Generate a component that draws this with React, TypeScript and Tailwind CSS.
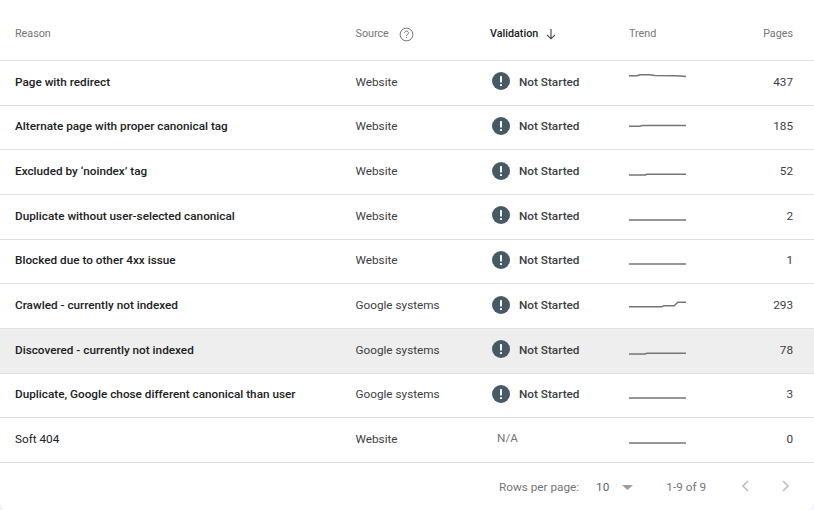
import React from "react";

type Row = { reason: string; source: string; status: boolean; pages: string; points: string; bold?: boolean; hover?: boolean };

const rows: Row[] = [
  { reason: "Page with redirect", source: "Website", status: true, pages: "437", points: "0,7.7 8,7.7 11,6.7 20,6.7 26,7.5 46,7.7 52,8 57,8.4", bold: true },
  { reason: "Alternate page with proper canonical tag", source: "Website", status: true, pages: "185", points: "0,14.2 11,14.2 13,13.4 57,13.4", bold: true },
  { reason: "Excluded by ‘noindex’ tag", source: "Website", status: true, pages: "52", points: "0,18 16,18 18,17.3 57,17.3", bold: true },
  { reason: "Duplicate without user-selected canonical", source: "Website", status: true, pages: "2", points: "0,18 57,18", bold: true },
  { reason: "Blocked due to other 4xx issue", source: "Website", status: true, pages: "1", points: "0,18 57,18", bold: true },
  { reason: "Crawled - currently not indexed", source: "Google systems", status: true, pages: "293", points: "0,15.7 33,15.7 35,14.7 45,14.7 49,11.2 57,11.2", bold: true },
  { reason: "Discovered - currently not indexed", source: "Google systems", status: true, pages: "78", points: "0,18 16,18 18,17.2 57,17.2", hover: true, bold: true },
  { reason: "Duplicate, Google chose different canonical than user", source: "Google systems", status: true, pages: "3", points: "0,18 57,18", bold: true },
  { reason: "Soft 404", source: "Website", status: false, pages: "0", points: "0,18 57,18" },
];

function Spark({ points }: { points: string }) {
  return (
    <svg width="58" height="30" viewBox="0 0 58 30" fill="none">
      <polyline points={points} stroke="#757575" strokeWidth="1.5" />
    </svg>
  );
}

function Alert() {
  return (
    <svg width="18" height="18" viewBox="0 0 18 18">
      <circle cx="9" cy="9" r="9" fill="#455a64" />
      <rect x="8" y="4" width="2" height="6.6" rx="0.6" fill="#ffffff" />
      <rect x="8" y="12" width="2" height="2" rx="0.4" fill="#ffffff" />
    </svg>
  );
}

export default function App() {
  return (
    <div className="w-[814px] h-[510px] bg-[#f1f3fa] overflow-hidden font-['Roboto',sans-serif] text-[11.75px] text-[#3c4043]">
      <div className="w-full h-full bg-white rounded-b-[8px] flex flex-col">
        <div
          className="h-[61px] shrink-0 grid items-center border-b border-[#e0e0e0] pl-[15px] pr-[21px] pt-[8px] text-[10.75px] text-[#757575]"
          style={{ gridTemplateColumns: "340.5px 134.5px 139px 1fr" }}
        >
          <div>Reason</div>
          <div className="flex items-center gap-[10px] pt-[1px]">
            Source
            <svg className="mb-[1px]" width="15" height="15" viewBox="0 0 15 15" fill="none">
              <circle cx="7.5" cy="7.5" r="6.4" stroke="#757575" strokeWidth="1" />
              <path d="M5.5 6c0-1.2.9-1.9 2-1.9s2 .7 2 1.8c0 1.4-2 1.5-2 3" stroke="#757575" strokeWidth="1" />
              <rect x="7" y="9.8" width="1" height="1.1" fill="#757575" />
            </svg>
          </div>
          <div className="flex items-center gap-[7px] font-medium text-[#202124]">
            Validation
            <svg width="12" height="12" viewBox="0 0 12 12" fill="none">
              <path d="M6 1v9.5M2 6.8l4 4 4-4" stroke="#3c4043" strokeWidth="1.1" />
            </svg>
          </div>
          <div className="flex justify-between">
            <span>Trend</span>
            <span>Pages</span>
          </div>
        </div>
        {rows.map((r) => (
          <div
            key={r.reason}
            className={`h-[44.67px] shrink-0 grid items-center border-b border-[#e0e0e0] pl-[15px] pr-[21px] ${r.hover ? "bg-[#eeeeee]" : ""}`}
            style={{ gridTemplateColumns: "340.5px 134.5px 139px 1fr" }}
          >
            <div className={`pb-[0.6px] ${r.bold ? "font-medium text-[#202124]" : "text-[#202124]"}`}>{r.reason}</div>
            <div className="pb-[0.6px]">{r.source}</div>
            <div>
              {r.status ? (
                <div className="flex items-center gap-[9px] pl-[2px] pb-[3px]">
                  <Alert />
                  <span className="pt-[2.6px] font-medium text-[#3c4043]">Not Started</span>
                </div>
              ) : (
                <span className="pl-[7px] text-[#757575] pb-[2px] block">N/A</span>
              )}
            </div>
            <div className="flex justify-between items-center">
              <Spark points={r.points} />
              <span className="pb-[0.6px]">{r.pages}</span>
            </div>
          </div>
        ))}
        <div className="flex-1 flex items-center justify-end pr-[24px] text-[#757575] pt-[2px]">
          <span>Rows per page:</span>
          <span className="ml-[17px] text-[#5f6368]">10</span>
          <svg className="ml-[13px]" width="11" height="5" viewBox="0 0 11 5">
            <path d="M0 0h11L5.5 5z" fill="#9e9e9e" />
          </svg>
          <span className="ml-[33px]">1-9 of 9</span>
          <svg className="ml-[35px] mb-[3px]" width="9" height="12" viewBox="0 0 9 12" fill="none">
            <path d="M7 1 2 6l5 5" stroke="#bdbdbd" strokeWidth="1.6" />
          </svg>
          <svg className="ml-[31px] mb-[3px]" width="9" height="12" viewBox="0 0 9 12" fill="none">
            <path d="M2 1l5 5-5 5" stroke="#bdbdbd" strokeWidth="1.6" />
          </svg>
        </div>
      </div>
    </div>
  );
}
